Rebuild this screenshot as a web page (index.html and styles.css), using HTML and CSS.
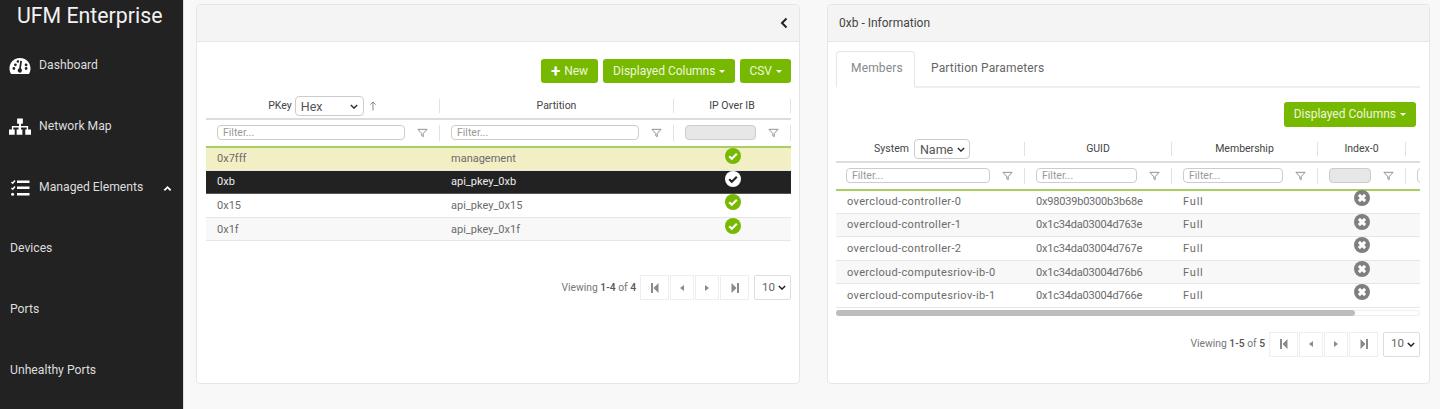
FILE: index.html
```html
<!DOCTYPE html>
<html lang="en">
<head>
<meta charset="utf-8">
<title>UFM Enterprise</title>
<link rel="stylesheet" href="styles.css">
</head>
<body>
<svg class="defs" width="0" height="0">
  <defs>
    <symbol id="funnel" viewBox="0 0 12 10"><path d="M1 1h10L6.800 5.600V9L5.200 8V5.600z" fill="none" stroke="currentColor" stroke-width="1"/></symbol>
    <symbol id="check" viewBox="0 0 16 16"><circle cx="8" cy="8" r="8" fill="currentColor"/><path d="M4.200 8.200l2.600 2.600 5-5" fill="none" stroke="var(--mark)" stroke-width="2.100"/></symbol>
    <symbol id="cross" viewBox="0 0 16 16"><circle cx="8" cy="8" r="8" fill="#7f7f7f"/><path d="M4.900 4.900l6.200 6.200m0-6.200l-6.200 6.200" fill="none" stroke="#fff" stroke-width="3"/></symbol>
    <symbol id="first" viewBox="0 0 10 10"><path d="M1 0h2v10H1zM8.500 0v10L3.500 5z" fill="currentColor"/></symbol>
    <symbol id="prev" viewBox="0 0 10 10"><path d="M7 2v6L3 5z" fill="currentColor"/></symbol>
    <symbol id="next" viewBox="0 0 10 10"><path d="M3 2v6l4-3z" fill="currentColor"/></symbol>
    <symbol id="last" viewBox="0 0 10 10"><path d="M9 0H7v10h2zM1.500 0v10l5-5z" fill="currentColor"/></symbol>
  </defs>
</svg>
<div class="app">
  <aside class="sidebar">
    <h1 class="brand">UFM Enterprise</h1>
    <nav class="nav">
      <a class="nav-item">
        <svg class="nav-icon" viewBox="0 0 22 18"><path fill="#fff" fill-rule="evenodd" d="M11 1C5 1 .5 5.600.5 11.500c0 1.900.5 3.700 1.400 5.200.2.300.5.300.8.300h16.600c.3 0 .6 0 .8-.3.900-1.500 1.400-3.300 1.400-5.200C21.500 5.600 17 1 11 1zM7.600 4.400a1.300 1.300 0 1 1 0 .1zM3.500 11.500a1.400 1.400 0 1 1 2.800 0 1.400 1.400 0 0 1-2.800 0zM5 7.800a1.400 1.400 0 1 1 2.800 0 1.400 1.400 0 0 1-2.800 0zM13 4l-1.100 7.400a2.200 2.200 0 1 1-2.300 3.800 2.200 2.200 0 0 1 .6-3.900L11.300 3.800zM15.700 7.800a1.400 1.400 0 1 1 0 .1zM15.700 11.500a1.400 1.400 0 1 1 2.800 0 1.400 1.400 0 0 1-2.800 0z"/></svg>
        <span>Dashboard</span>
      </a>
      <a class="nav-item">
        <svg class="nav-icon" viewBox="0 0 23 18"><path fill="#fff" d="M8.500 0h6v5.500h-2V8h7.500v3.500h3V17h-6v-5.500h1.500V9.500h-6v2h1.500V17h-6v-5.500H10v-2H4.500v2H6V17H0v-5.500h3V8h7.500V5.500h-2z"/></svg>
        <span>Network Map</span>
      </a>
      <a class="nav-item">
        <svg class="nav-icon" viewBox="0 0 22 18"><path fill="none" stroke="#fff" stroke-width="1.500" d="M2.500 3l1.200 1.200L6 1.500M2.500 9l1.200 1.200L6 7.500"/><circle cx="3.600" cy="15.300" r="1.500" fill="#fff"/><path fill="#fff" d="M8 1.500h12.500v2.600H8zM8 7.500h12.500v2.600H8zM8 14h12.500v2.600H8z"/></svg>
        <span>Managed Elements</span>
        <svg class="nav-caret" viewBox="0 0 10 7"><path d="M1.500 5.500L5 2l3.500 3.500" fill="none" stroke="#fff" stroke-width="2"/></svg>
      </a>
      <a class="nav-item sub">Devices</a>
      <a class="nav-item sub">Ports</a>
      <a class="nav-item sub">Unhealthy Ports</a>
    </nav>
  </aside>

  <main class="content">
    <section class="panel">
      <header class="panel-head end">
        <svg class="collapse" viewBox="0 0 8 12"><path d="M6.500 1.500L2 6l4.500 4.500" fill="none" stroke="#222" stroke-width="2"/></svg>
      </header>
      <div class="panel-body">
        <div class="toolbar">
          <button class="btn"><b class="plus">+</b> New</button>
          <button class="btn">Displayed Columns <i class="caret"></i></button>
          <button class="btn btn-sm">CSV <i class="caret"></i></button>
        </div>
        <div class="grid-table pkeys">
          <div class="row head">
            <div class="th"><span>PKey</span><span class="sel wide">Hex<svg class="chev" viewBox="0 0 10 6"><path d="M1 1l4 4 4-4" fill="none" stroke="#333" stroke-width="1.800"/></svg></span><svg class="sort" viewBox="0 0 8 10"><path d="M4 9.500V1M1.300 3.600L4 1l2.700 2.600" fill="none" stroke="#888" stroke-width="1"/></svg></div>
            <div class="th">Partition</div>
            <div class="th">IP Over IB</div>
          </div>
          <div class="row filters">
            <div class="tf"><span class="input">Filter...</span><svg class="funnel"><use href="#funnel"/></svg></div>
            <div class="tf"><span class="input">Filter...</span><svg class="funnel"><use href="#funnel"/></svg></div>
            <div class="tf"><span class="input off"></span><svg class="funnel"><use href="#funnel"/></svg></div>
          </div>
          <div class="row body first yellow"><div class="td">0x7fff</div><div class="td">management</div><div class="td mid"><svg class="status"><use href="#check"/></svg></div></div>
          <div class="row body picked"><div class="td">0xb</div><div class="td">api_pkey_0xb</div><div class="td mid"><svg class="status"><use href="#check"/></svg></div></div>
          <div class="row body"><div class="td">0x15</div><div class="td">api_pkey_0x15</div><div class="td mid"><svg class="status"><use href="#check"/></svg></div></div>
          <div class="row body alt"><div class="td">0x1f</div><div class="td">api_pkey_0x1f</div><div class="td mid"><svg class="status"><use href="#check"/></svg></div></div>
        </div>
        <div class="pager left-pager">
          <span class="count">Viewing <b>1-4</b> of <b>4</b></span>
          <span class="pages">
            <span class="pg w-l"><svg><use href="#first"/></svg></span><span class="pg"><svg><use href="#prev"/></svg></span><span class="pg"><svg><use href="#next"/></svg></span><span class="pg w-l"><svg><use href="#last"/></svg></span>
          </span>
          <span class="size">10<svg class="chev" viewBox="0 0 10 6"><path d="M1 1l4 4 4-4" fill="none" stroke="#222" stroke-width="1.800"/></svg></span>
        </div>
      </div>
    </section>

    <section class="panel">
      <header class="panel-head"><h2>0xb - Information</h2></header>
      <div class="panel-body side">
        <div class="tabs">
          <a class="tab on">Members</a>
          <a class="tab">Partition Parameters</a>
        </div>
        <div class="toolbar t2">
          <button class="btn">Displayed Columns <i class="caret"></i></button>
        </div>
        <div class="scroller">
          <div class="grid-table members">
            <div class="row head">
              <div class="th shifted"><span>System</span><span class="sel">Name<svg class="chev" viewBox="0 0 10 6"><path d="M1 1l4 4 4-4" fill="none" stroke="#333" stroke-width="1.800"/></svg></span></div>
              <div class="th">GUID</div>
              <div class="th">Membership</div>
              <div class="th">Index-0</div>
              <div class="th"></div>
            </div>
            <div class="row filters">
              <div class="tf"><span class="input">Filter...</span><svg class="funnel"><use href="#funnel"/></svg></div>
              <div class="tf"><span class="input">Filter...</span><svg class="funnel"><use href="#funnel"/></svg></div>
              <div class="tf"><span class="input">Filter...</span><svg class="funnel"><use href="#funnel"/></svg></div>
              <div class="tf"><span class="input off"></span><svg class="funnel"><use href="#funnel"/></svg></div>
              <div class="tf"><span class="input"></span></div>
            </div>
            <div class="row body first"><div class="td">overcloud-controller-0</div><div class="td">0x98039b0300b3b68e</div><div class="td">Full</div><div class="td mid"><svg class="status"><use href="#cross"/></svg></div><div class="td"></div></div>
            <div class="row body alt"><div class="td">overcloud-controller-1</div><div class="td">0x1c34da03004d763e</div><div class="td">Full</div><div class="td mid"><svg class="status"><use href="#cross"/></svg></div><div class="td"></div></div>
            <div class="row body"><div class="td">overcloud-controller-2</div><div class="td">0x1c34da03004d767e</div><div class="td">Full</div><div class="td mid"><svg class="status"><use href="#cross"/></svg></div><div class="td"></div></div>
            <div class="row body alt"><div class="td">overcloud-computesriov-ib-0</div><div class="td">0x1c34da03004d76b6</div><div class="td">Full</div><div class="td mid"><svg class="status"><use href="#cross"/></svg></div><div class="td"></div></div>
            <div class="row body"><div class="td">overcloud-computesriov-ib-1</div><div class="td">0x1c34da03004d766e</div><div class="td">Full</div><div class="td mid"><svg class="status"><use href="#cross"/></svg></div><div class="td"></div></div>
          </div>
        </div>
        <div class="scrollbar"><div class="thumb"></div></div>
        <div class="pager">
          <span class="count">Viewing <b>1-5</b> of <b>5</b></span>
          <span class="pages">
            <span class="pg w-l"><svg><use href="#first"/></svg></span><span class="pg"><svg><use href="#prev"/></svg></span><span class="pg"><svg><use href="#next"/></svg></span><span class="pg w-l"><svg><use href="#last"/></svg></span>
          </span>
          <span class="size">10<svg class="chev" viewBox="0 0 10 6"><path d="M1 1l4 4 4-4" fill="none" stroke="#222" stroke-width="1.800"/></svg></span>
        </div>
      </div>
    </section>
  </main>
</div>
</body>
</html>
```

FILE: styles.css
```css
* { box-sizing: border-box; }
html, body { margin: 0; height: 100%; }
body {
  background: #f8f8f8;
  color: #555;
  font: 11px/1.2 Roboto, "Liberation Sans", sans-serif;
  overflow: hidden;
}
.defs { position: absolute; }
.app { display: flex; height: 409px; }

.sidebar { width: 184px; flex: none; background: #222; border-right: 1px solid #ddd; color: #ddd; }
.brand { margin: 0; height: 34px; padding-left: 17px; color: #f2f2f2; font-size: 21.300px; font-weight: 400; line-height: 31px; white-space: nowrap; }
.nav-item { display: flex; align-items: center; height: 61px; padding: 2px 0 0 9px; font-size: 12.200px; }
.nav-icon { width: 22px; height: 18px; margin-right: 8px; flex: none; }
.nav-caret { width: 9px; height: 7px; margin: 2px 0 0 20px; }
.sub { padding-left: 10px; }

.content { flex: 1; display: flex; gap: 27px; padding: 4px 10px 25px 12px; align-items: stretch; }
.panel { flex: 0 0 604px; height: 380px; background: #fff; border: 1px solid #e6e6e6; border-radius: 4px; overflow: hidden; display: flex; flex-direction: column; }
.panel + .panel { flex-basis: 603px; }
.panel-head { height: 37px; flex: none; background: #f4f4f4; border-bottom: 1px solid #e6e6e6; display: flex; align-items: center; padding: 0 11px; }
.panel-head.end { justify-content: flex-end; }
.panel-head h2 { margin: 0; font-size: 12px; font-weight: 400; color: #444; }
.collapse { width: 8px; height: 12px; }
.panel-body { padding: 17px 8px 0 9px; flex: 1; min-height: 0; }
.panel-body.side { padding: 9px 9px 0 8px; }

.toolbar { display: flex; justify-content: flex-end; gap: 5px; height: 24px; margin-bottom: 9px; }
.toolbar.t2 { margin: 14px 4px 9px 0; height: 25px; }
.btn { height: 100%; border: 0; border-radius: 3px; background: #76b900; color: #eef7dc; font: inherit; font-size: 12px; padding: 0 10px; display: inline-flex; align-items: center; gap: 4px; white-space: nowrap; }
.btn-sm { padding: 0 9px; }
.plus { color: #fff; font-size: 17px; line-height: 16px; font-weight: 700; }
.caret { width: 0; height: 0; border: 3.500px solid transparent; border-top-color: #fff; border-bottom: 0; }

.row { display: grid; }
.pkeys .row { grid-template-columns: 234px 234px 117px; }
.pkeys .head { padding-top: 2px; }
.members { width: 640px; }
.members .row { grid-template-columns: 189px 147px 146px 88px 70px; }
.members .head { height: 27px; }
.members .tf:first-child { padding-left: 10px; }
.members .body .td:first-child { letter-spacing: .35px; }
.members .body .td:nth-child(2) { letter-spacing: -.2px; }
.members .body .td:nth-child(3) { letter-spacing: .8px; }
.members .first .status { margin-top: -1px; }
.scroller { overflow: hidden; }

.head { height: 28px; padding-top: 1px; border-bottom: 2px solid #ddd; align-items: center; }
.th { height: 14px; display: flex; align-items: center; justify-content: center; gap: 3px; border-right: 1px solid #e2e2e2; color: #444; font-size: 10.500px; }
.shifted { padding-right: 16px; gap: 5px; }
.filters { height: 27.500px; align-items: center; border-bottom: 2px solid #a9cf62; }
.tf { height: 16px; padding: 0 11px; display: flex; align-items: center; gap: 12px; border-right: 1px solid #e2e2e2; }
.input { flex: 1; min-width: 0; height: 15px; border: 1px solid #ccc; border-radius: 4px; padding-left: 5px; color: #999; font-size: 10.500px; line-height: 13px; background: #fff; }
.input.off { background: #e7e7e7; }
.funnel { width: 11px; height: 10px; flex: none; color: #888; }

.sel { display: inline-flex; align-items: center; justify-content: space-between; flex: none; height: 20px; width: 56px; padding: 0 5px; gap: 4px; border: 1px solid #ccc; border-radius: 4px; background: #fff; font-size: 12.500px; color: #555; }
.sel.wide { width: 69px; }
.chev { width: 8px; height: 5px; flex: none; }
.sort { width: 8px; height: 10px; margin-left: 2px; }

.body { height: 23.670px; border-bottom: 1px solid #e6e6e6; font-size: 11px; align-items: center; }
.body.first { height: 23px; }
.td { padding-left: 11px; color: #6b6b6b; }
.mid { padding: 0; display: flex; justify-content: center; align-self: start; }
.status { width: 16px; height: 16px; color: #76b900; --mark: #fff; }
.yellow { background: #f3efc4; }
.picked { background: #222; border-bottom-color: #555; }
.picked .td { color: #eee; }
.picked .status { color: #fff; --mark: #222; }
.alt { background: #f8f8f8; }

.pager { display: flex; justify-content: flex-end; align-items: center; height: 25px; margin-top: 15.500px; }
.left-pager { margin-top: 34px; }
.count { color: #777; font-size: 10.300px; margin-right: 4px; }
.count b { font-weight: 500; color: #555; }
.pages { display: flex; gap: 1px; margin-right: 5px; }
.pg { width: 24px; height: 25px; border: 1px solid #eee; display: flex; align-items: center; justify-content: center; color: #8a8a8a; }
.pg.w-l { width: 29px; }
.pg svg { width: 10px; height: 10px; }
.size { width: 37px; height: 25px; border: 1px solid #ddd; border-radius: 2px; display: flex; align-items: center; justify-content: space-between; padding: 0 4px 0 7px; font-size: 11.500px; color: #666; }

.tabs { display: flex; height: 37px; border-bottom: 2px solid #eee; }
.tab { padding: 0 15px 2px; display: flex; align-items: center; font-size: 12px; letter-spacing: .15px; color: #666; height: 37px; }
.tab.on { border: 1px solid #e6e6e6; border-bottom: 2px solid #fff; border-radius: 4px 4px 0 0; padding-left: 14px; color: #888; width: 79px; }
.tabs .tab:last-child { padding-left: 16px; }

.scrollbar { height: 6.500px; margin-top: 1.500px; border: 1px solid #eee; border-radius: 4px; }
.thumb { width: 519px; height: 6.500px; margin: -1px 0 0 -1px; background: #bdbdbd; border-radius: 4px; }
```
